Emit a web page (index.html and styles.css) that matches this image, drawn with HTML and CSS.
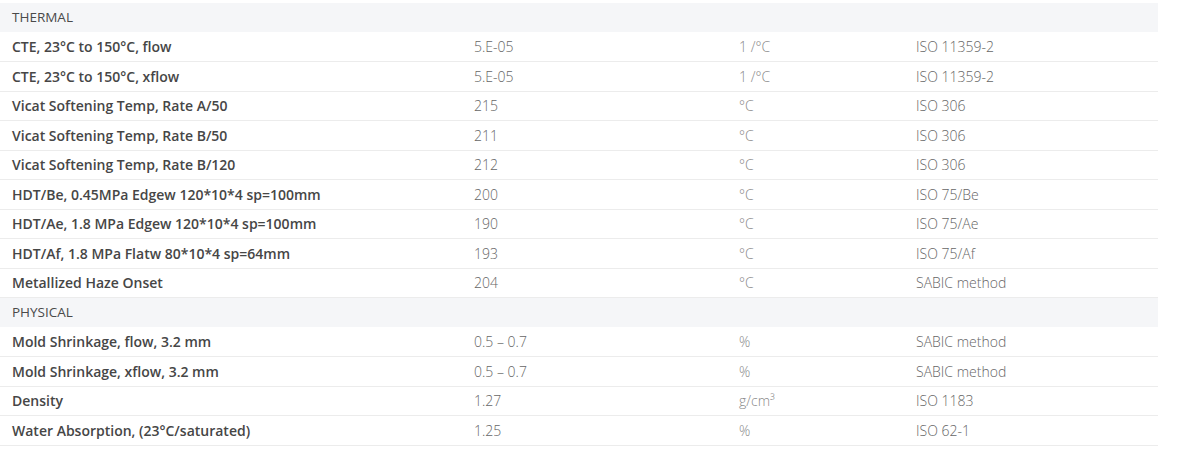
FILE: index.html
```html
<!DOCTYPE html>
<html>
<head>
<meta charset="utf-8">
<link rel="stylesheet" href="styles.css">
</head>
<body>
<div class="table">
  <div class="section">THERMAL</div>
  <div class="row"><div class="name">CTE, 23°C to 150°C, flow</div><div class="val">5.E-05</div><div class="unit">1 /°C</div><div class="std">ISO 11359-2</div></div>
  <div class="row"><div class="name">CTE, 23°C to 150°C, xflow</div><div class="val">5.E-05</div><div class="unit">1 /°C</div><div class="std">ISO 11359-2</div></div>
  <div class="row"><div class="name">Vicat Softening Temp, Rate A/50</div><div class="val">215</div><div class="unit">°C</div><div class="std">ISO 306</div></div>
  <div class="row"><div class="name">Vicat Softening Temp, Rate B/50</div><div class="val">211</div><div class="unit">°C</div><div class="std">ISO 306</div></div>
  <div class="row"><div class="name">Vicat Softening Temp, Rate B/120</div><div class="val">212</div><div class="unit">°C</div><div class="std">ISO 306</div></div>
  <div class="row"><div class="name">HDT/Be, 0.45MPa Edgew 120*10*4 sp=100mm</div><div class="val">200</div><div class="unit">°C</div><div class="std">ISO 75/Be</div></div>
  <div class="row"><div class="name">HDT/Ae, 1.8 MPa Edgew 120*10*4 sp=100mm</div><div class="val">190</div><div class="unit">°C</div><div class="std">ISO 75/Ae</div></div>
  <div class="row"><div class="name">HDT/Af, 1.8 MPa Flatw 80*10*4 sp=64mm</div><div class="val">193</div><div class="unit">°C</div><div class="std">ISO 75/Af</div></div>
  <div class="row"><div class="name">Metallized Haze Onset</div><div class="val">204</div><div class="unit">°C</div><div class="std">SABIC method</div></div>
  <div class="section">PHYSICAL</div>
  <div class="row"><div class="name">Mold Shrinkage, flow, 3.2 mm</div><div class="val">0.5 – 0.7</div><div class="unit">%</div><div class="std">SABIC method</div></div>
  <div class="row"><div class="name">Mold Shrinkage, xflow, 3.2 mm</div><div class="val">0.5 – 0.7</div><div class="unit">%</div><div class="std">SABIC method</div></div>
  <div class="row"><div class="name">Density</div><div class="val">1.27</div><div class="unit">g/cm³</div><div class="std">ISO 1183</div></div>
  <div class="row"><div class="name">Water Absorption, (23°C/saturated)</div><div class="val">1.25</div><div class="unit">%</div><div class="std">ISO 62-1</div></div>
</div>
</body>
</html>
```
FILE: styles.css
```css
html, body {
  margin: 0;
  padding: 0;
  background: #ffffff;
}
body {
  font-family: "Open Sans", "Noto Sans", sans-serif;
  font-size: 14px;
  color: #444;
}
.table {
  width: 1158px;
  padding-top: 3px;
}
.section {
  height: 28.5px;
  margin-bottom: 1px;
  background: #f5f6f8;
  display: flex;
  align-items: center;
  padding-left: 12px;
  font-size: 13.5px;
  font-weight: 500;
  color: #4a4a4a;
}
.row {
  display: grid;
  grid-template-columns: 462px 265px 177px 1fr;
  height: 29.5px;
  box-sizing: border-box;
  border-bottom: 1px solid #ececec;
  align-items: center;
}
.row > div {
  padding-left: 12px;
  white-space: nowrap;
}
.name {
  font-weight: 600;
  color: #464646;
}
.val, .std {
  font-weight: 300;
  color: #666;
}
.unit {
  font-weight: 300;
  color: #888;
}
```
